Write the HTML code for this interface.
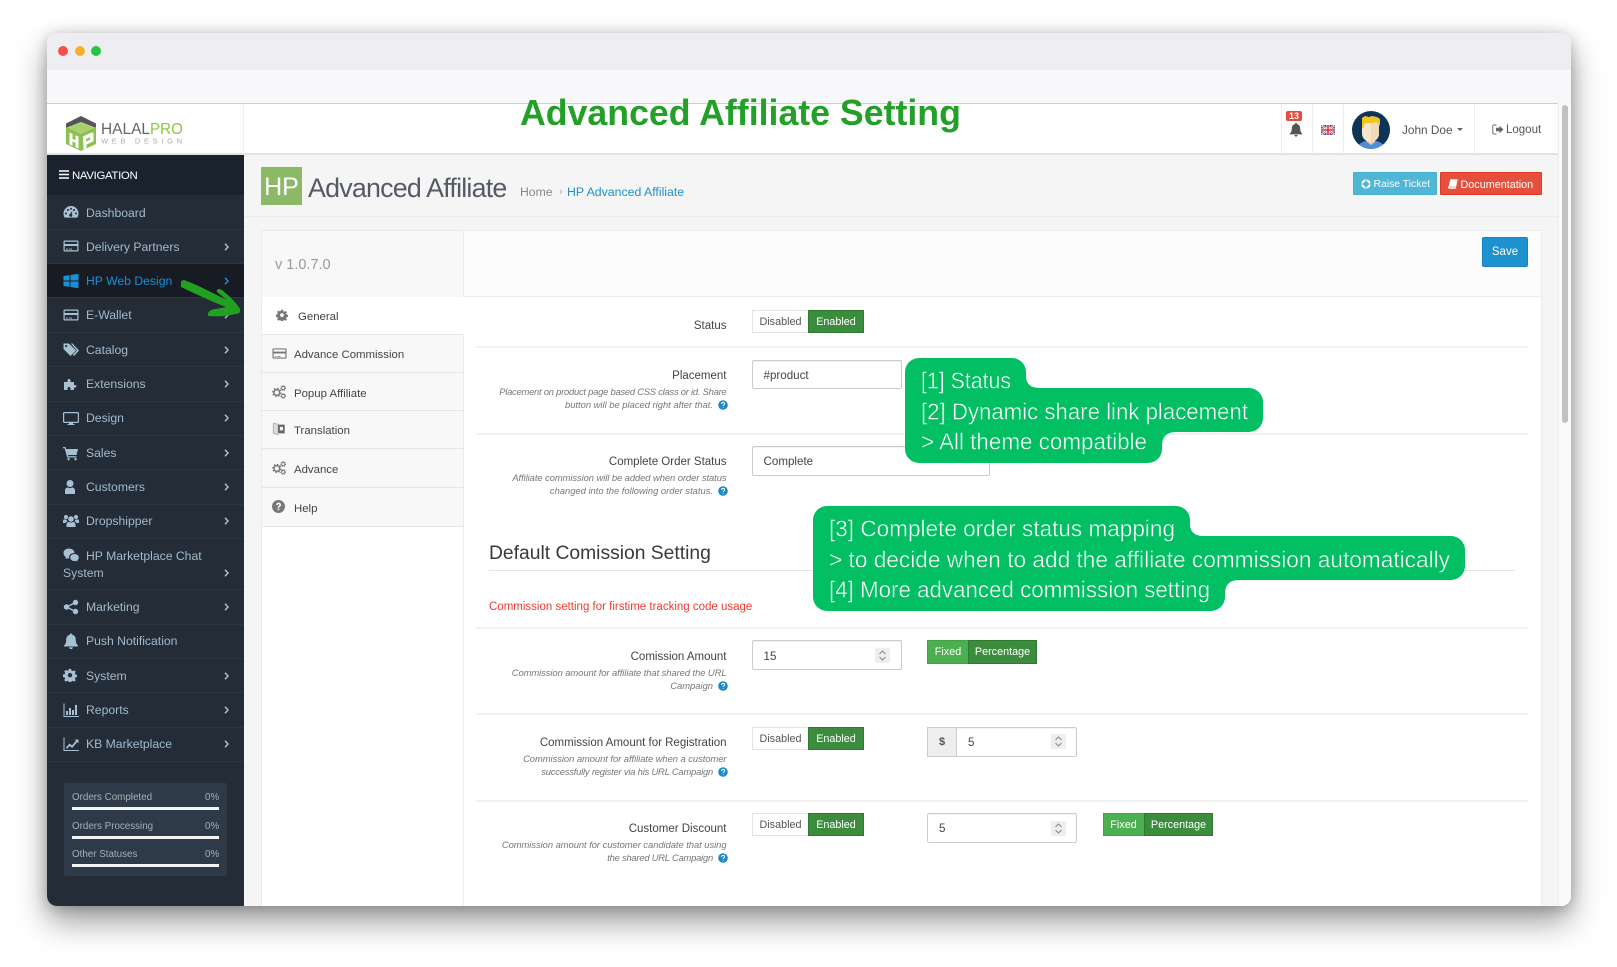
<!DOCTYPE html>
<html lang="en"><head><meta charset="utf-8"><title>Advanced Affiliate Setting</title>
<style>
html,body{margin:0;padding:0;background:#fff;width:1617px;height:967px;overflow:hidden}
body{font-family:"Liberation Sans",sans-serif;color:#444}
#win{position:absolute;left:47px;top:33px;width:1524px;height:873px;border-radius:10px;box-shadow:0 16px 32px rgba(0,0,0,.38),0 2px 14px rgba(0,0,0,.22)}
#clip{position:absolute;left:0;top:0;width:1524px;height:873px;border-radius:10px;overflow:hidden}
#p{position:absolute;left:-47px;top:-33px;width:1617px;height:967px;background:#fff}
.b{position:absolute}
.t{position:absolute;line-height:16px;white-space:nowrap}
.r{text-align:right;right:890.5px}
.nav{position:absolute;left:86px;line-height:16px;font-size:12.2px;color:#a3bacd;white-space:nowrap}
.ic{position:absolute;left:63px;width:16px;height:16px;fill:#a8c0d4}
.ch{position:absolute;left:224px;width:5px;height:8px;fill:none;stroke:#a8c0d4;stroke-width:1.5}
.sep{position:absolute;left:47px;width:197px;height:1px;background:#2b3643}
.tab{position:absolute;left:262px;width:201px;background:#f8f8f8;border-bottom:1px solid #e6e6e6;box-sizing:border-box}
.tl{position:absolute;left:294px;font-size:11.4px;line-height:16px;color:#444;white-space:nowrap}
.ti{position:absolute;left:272px;width:15px;height:15px;fill:#777}
.hr{position:absolute;left:476px;width:1052px;height:1.5px;background:#f1f1f1}
.lb{font-size:11.5px;color:#444}
.hp{font-size:9.4px;font-style:italic;color:#777}
.inp{position:absolute;background:#fff;border:1px solid #ccc;box-sizing:border-box;border-radius:2px;box-shadow:inset 0 1px 1px rgba(0,0,0,.05)}
.val{position:absolute;font-size:11.6px;line-height:16px;color:#444}
.dis{position:absolute;background:#fff;border:1px solid #e4e4e4;box-sizing:border-box;font-size:10.8px;line-height:22px;text-align:center;color:#555}
.en{position:absolute;background:#3b8c3d;border:1px solid #2f7a31;box-sizing:border-box;font-size:10.8px;line-height:22px;text-align:center;color:#fff}
.fx{position:absolute;background:#4caf50;border:1px solid #45a049;box-sizing:border-box;font-size:10.8px;line-height:22px;text-align:center;color:#fff}
.help{position:absolute;width:10px;height:10px}
.spin{position:absolute;width:15px;height:15px;background:#eee}
.spin svg{display:block}
</style></head>
<body>
<svg width="0" height="0" style="position:absolute">
<symbol id="card" viewBox="0 0 16 16"><path d="M1.500 2.500h13a1 1 0 0 1 1 1v9a1 1 0 0 1-1 1h-13a1 1 0 0 1-1-1v-9a1 1 0 0 1 1-1zM1.700 3.700V6h12.600V3.700zM1.700 8v4.300h12.600V8zM3 10.600h2v.9H3zM6 10.600h3v.9H6z" fill-rule="evenodd"/></symbol>
<symbol id="cog" viewBox="0 0 16 16"><path d="M6.700 1h2.600l.4 2 1.400.6 1.700-1.100 1.800 1.800-1.100 1.700.6 1.400 2 .4v2.600l-2 .4-.6 1.400 1.100 1.700-1.800 1.800-1.700-1.100-1.400.6-.4 2H6.700l-.4-2-1.400-.6-1.700 1.100-1.800-1.800 1.100-1.700-.6-1.400-2-.4V7.400l2-.4.6-1.400-1.100-1.700 1.800-1.800 1.700 1.100 1.400-.6zM8 5.700a2.500 2.500 0 1 0 0 5 2.500 2.500 0 0 0 0-5z" fill-rule="evenodd"/></symbol>
<symbol id="cogs" viewBox="0 0 16 16"><g fill="none" stroke="#777"><circle cx="5.500" cy="8.500" r="3.200" stroke-width="1.700"/><circle cx="5.500" cy="8.500" r="4.600" stroke-width="1.600" stroke-dasharray="1.800 1.800"/><circle cx="12.800" cy="3.500" r="1.900" stroke-width="1.100"/><circle cx="12.800" cy="3.500" r="2.800" stroke-width="1" stroke-dasharray="1.200 1.200"/><circle cx="12.800" cy="12.500" r="1.900" stroke-width="1.100"/><circle cx="12.800" cy="12.500" r="2.800" stroke-width="1" stroke-dasharray="1.200 1.200"/></g></symbol>
<symbol id="chev" viewBox="0 0 5 8"><path d="M1 .7l3 3.300-3 3.300"/></symbol>
<symbol id="bell" viewBox="0 0 16 16"><path d="M8 .5a1.200 1.200 0 0 1 1.200 1.300C11.700 2.300 12.800 4.300 12.800 7c0 3 1 4.500 2.200 5.500v1H1v-1C2.200 11.500 3.200 10 3.200 7c0-2.700 1.100-4.700 3.600-5.200A1.200 1.200 0 0 1 8 .5zM6.200 14.300h3.600a1.800 1.800 0 0 1-3.600 0z"/></symbol>
<symbol id="q" viewBox="0 0 10 10"><circle cx="5" cy="5" r="4.800" fill="#1e88c9"/><path d="M3.500 3.900C3.600 2.900 4.200 2.400 5.100 2.400c.9 0 1.500.5 1.500 1.300 0 .7-.4 1-.9 1.300-.4.300-.5.500-.5 1M5.200 7.100v.7" fill="none" stroke="#fff" stroke-width="1"/></symbol>
<symbol id="updn" viewBox="0 0 15 15"><path d="M4.500 6l3-3 3 3M4.500 9l3 3 3-3" fill="none" stroke="#888" stroke-width="1"/></symbol>
</svg>

<div id="win"><div id="clip"><div id="p">
<!-- Window chrome -->
<div class="b" style="left:47px;top:33px;width:1524px;height:37px;background:#eeeef2"></div>
<div class="b" style="left:47px;top:70px;width:1524px;height:33px;background:#f8f8fa"></div>
<div class="b" style="left:57.7px;top:46.3px;width:10px;height:10px;border-radius:50%;background:#f64f4a"></div>
<div class="b" style="left:74.7px;top:46.3px;width:10px;height:10px;border-radius:50%;background:#f7b02c"></div>
<div class="b" style="left:91.3px;top:46.3px;width:10px;height:10px;border-radius:50%;background:#27c53f"></div>

<!-- Header -->
<div class="b" style="left:47px;top:103px;width:1511px;height:52px;background:#fff;border-top:1px solid #cfcfcf;box-sizing:border-box;border-bottom:2px solid #e2e2e2"></div>
<div class="b" style="left:243px;top:104px;width:1px;height:51px;background:#eee"></div>
<div class="b" style="left:1281px;top:104px;width:1px;height:49px;background:#eee"></div>
<div class="b" style="left:1312px;top:104px;width:1px;height:49px;background:#eee"></div>
<div class="b" style="left:1343px;top:104px;width:1px;height:49px;background:#eee"></div>
<div class="b" style="left:1474px;top:104px;width:1px;height:49px;background:#eee"></div>

<!-- Logo -->
<svg class="b" style="left:64px;top:114px" width="124" height="38" viewBox="0 0 124 38">
<path d="M17 2L32 9.500V14L17 8 2 14V9.500z" fill="#555"/>
<path d="M3 14l14-6 14 6-14 6z" fill="#a9cf6e"/>
<path d="M2 13l15 7 15-7v17l-15 7-15-7z" fill="#8cc152"/>
<path d="M5.500 18.500l3 1.400v5l3 1.300v-5l3 1.400v12l-3-1.400v-4.500l-3-1.300v4.500l-3-1.400zM19 22.500l9-4.200 1.500 1v8l-7 3.300v3.500l-3 1.500z" fill="#fff"/>
<path d="M22 25l4-1.900v2.500l-4 1.900z" fill="#8cc152"/>
<text x="37" y="20" font-family="Liberation Sans" font-size="16" fill="#666" textLength="49" lengthAdjust="spacingAndGlyphs">HALAL</text>
<text x="86" y="20" font-family="Liberation Sans" font-size="16" fill="#8cc63f" textLength="33" lengthAdjust="spacingAndGlyphs">PRO</text>
<text x="37" y="29.500" font-family="Liberation Sans" font-size="7.500" fill="#aaa" textLength="81">WEB DESIGN</text>
</svg>

<!-- Header right -->
<div class="b" style="left:1286px;top:111px;width:16px;height:10px;background:#e74c3c;border-radius:2px;color:#fff;font-size:9px;font-weight:bold;line-height:10px;text-align:center">13</div>
<svg class="b" style="left:1289px;top:122px" width="14" height="15" fill="#555"><use href="#bell"/></svg>
<svg class="b" style="left:1321px;top:125px" width="14" height="10" viewBox="0 0 14 10"><rect width="14" height="10" fill="#3f4f9a"/><path d="M0 0l14 10M14 0L0 10" stroke="#fff" stroke-width="2"/><path d="M0 0l14 10M14 0L0 10" stroke="#e04050" stroke-width=".7"/><path d="M7 0v10M0 5h14" stroke="#fff" stroke-width="3"/><path d="M7 0v10M0 5h14" stroke="#e02a3a" stroke-width="1.600"/></svg>
<svg class="b" style="left:1352px;top:111px" width="38" height="38" viewBox="0 0 38 38"><defs><clipPath id="av"><circle cx="19" cy="19" r="19"/></clipPath></defs><g clip-path="url(#av)"><rect width="38" height="38" fill="#0e3557"/><path d="M5 38c1-6 6-8 14-9 8 1 13 3 14 9z" fill="#4b8fd6"/><path d="M15 24h8v7l-4 3-4-3z" fill="#e6cda8"/><path d="M10 9h17v14c0 4-4 8-8.500 8S10 27 10 23z" fill="#f7e6cc"/><path d="M19 10h8v13c0 4-4 8-8 8z" fill="#efd9b8"/><path d="M10 17V7l3-2 4 1 3-1 5 1 3 2v7l-3-4-6 1-6 0-2 5z" fill="#f2c51c"/></g></svg>
<div class="t" style="left:1402px;top:122px;font-size:11.8px;color:#555">John Doe</div>
<div class="b" style="left:1456.5px;top:128px;width:0;height:0;border-left:3.5px solid transparent;border-right:3.5px solid transparent;border-top:3.5px solid #666"></div>
<svg class="b" style="left:1492px;top:124px" width="12" height="11" viewBox="0 0 12 11"><path d="M4.500 1H2.200A1.500 1.500 0 0 0 .7 2.500v6A1.500 1.500 0 0 0 2.200 10h2.300" fill="none" stroke="#888" stroke-width="1.200"/><path d="M4 3.800h3.500V1.800l4 3.700-4 3.700V7.200H4z" fill="#666"/></svg>
<div class="t" style="left:1506px;top:122px;font-size:11.5px;color:#555">Logout</div>

<!-- Sidebar -->
<div class="b" style="left:47px;top:155px;width:197px;height:751px;background:#232c37"></div>
<div class="b" style="left:47px;top:155px;width:197px;height:40px;background:#1a222e"></div>
<div class="b" style="left:47px;top:263px;width:197px;height:34px;background:#171c24"></div>
<svg class="b" style="left:59px;top:170px" width="10" height="9"><path d="M0 1h10M0 4.500h10M0 8h10" stroke="#fff" stroke-width="1.500"/></svg>
<div class="t" style="left:72px;top:168px;font-size:11.4px;color:#fff;letter-spacing:-.32px">NAVIGATION</div>

<div class="sep" style="top:229px"></div><div class="sep" style="top:263px"></div><div class="sep" style="top:297px"></div><div class="sep" style="top:332px"></div><div class="sep" style="top:366px"></div><div class="sep" style="top:401px"></div><div class="sep" style="top:435px"></div><div class="sep" style="top:469px"></div><div class="sep" style="top:504px"></div><div class="sep" style="top:538px"></div><div class="sep" style="top:589px"></div><div class="sep" style="top:624px"></div><div class="sep" style="top:658px"></div><div class="sep" style="top:692px"></div><div class="sep" style="top:727px"></div><div class="sep" style="top:761px"></div>

<svg class="ic" style="top:204px" viewBox="0 0 16 16"><path d="M8 2a7.500 7.500 0 0 0-7.500 7.500c0 1.500.4 2.900 1.200 4.100h12.600c.8-1.200 1.200-2.600 1.200-4.100A7.500 7.500 0 0 0 8 2zM3 8.500a1 1 0 1 1 0 2 1 1 0 0 1 0-2zm2-3.500a1 1 0 1 1 0 2 1 1 0 0 1 0-2zm3-1.200a1 1 0 1 1 0 2 1 1 0 0 1 0-2zm3 1.200a1 1 0 1 1 0 2 1 1 0 0 1 0-2zm2 3.500a1 1 0 1 1 0 2 1 1 0 0 1 0-2zM9.500 6.500L8.800 10a1.600 1.600 0 1 1-1.500-.3z" fill-rule="evenodd"/></svg>
<div class="nav" style="top:205px">Dashboard</div>
<svg class="ic" style="top:238px"><use href="#card"/></svg>
<div class="nav" style="top:239px">Delivery Partners</div>
<svg class="ch" style="top:243px"><use href="#chev"/></svg>
<svg class="ic" style="top:273px;fill:#1a8fd6" viewBox="0 0 16 16"><path d="M.5 3l6-.9v5.400h-6zM7.500 2l8-1.200v6.700h-8zM.5 8.500h6v5.400l-6-.9zM7.500 8.500h8v6.700l-8-1.200z"/></svg>
<div class="nav" style="top:273px;color:#1a8fd6">HP Web Design</div>
<svg class="ch" style="top:277px;stroke:#1a8fd6"><use href="#chev"/></svg>
<svg class="ic" style="top:307px"><use href="#card"/></svg>
<div class="nav" style="top:307px">E-Wallet</div>
<svg class="ch" style="top:311px"><use href="#chev"/></svg>
<svg class="ic" style="top:341px" viewBox="0 0 16 16"><path d="M.5 2.500h5.500l7 7-5.500 5.500-7-7zM3.200 4a1.100 1.100 0 1 0 0 2.200 1.100 1.100 0 0 0 0-2.200zM8 2.500h1.500l6.500 7-5 5.500-1.200-1.200 4-4.300z" fill-rule="evenodd"/></svg>
<div class="nav" style="top:342px">Catalog</div>
<svg class="ch" style="top:346px"><use href="#chev"/></svg>
<svg class="ic" style="top:376px" viewBox="0 0 16 16"><path d="M1 6h3.500V4.500a1.500 1.500 0 1 1 3 0V6H11v3h.8a1.300 1.300 0 1 1 0 2.500H11V14H7.500v-1.500a1.500 1.500 0 1 0-3 0V14H1z"/></svg>
<div class="nav" style="top:376px">Extensions</div>
<svg class="ch" style="top:380px"><use href="#chev"/></svg>
<svg class="ic" style="top:410px" viewBox="0 0 16 16"><path d="M1.500 2h13A1.500 1.500 0 0 1 16 3.500v8a1.500 1.500 0 0 1-1.500 1.500H10v1h1.500v1h-7v-1H6v-1H1.500A1.500 1.500 0 0 1 0 11.500v-8A1.500 1.500 0 0 1 1.500 2zM1.200 3.200v8.600h13.600V3.200z" fill-rule="evenodd"/></svg>
<div class="nav" style="top:410px">Design</div>
<svg class="ch" style="top:414px"><use href="#chev"/></svg>
<svg class="ic" style="top:445px" viewBox="0 0 16 16"><path d="M0 2h2.500l.6 2H15l-1.500 6H5l.3 1.200h8.200v1.300H4.200L1.600 3.300H0zM5.500 13a1.200 1.200 0 1 1 0 2.400 1.200 1.200 0 0 1 0-2.400zm7 0a1.200 1.200 0 1 1 0 2.400 1.200 1.200 0 0 1 0-2.400z"/></svg>
<div class="nav" style="top:445px">Sales</div>
<svg class="ch" style="top:449px"><use href="#chev"/></svg>
<svg class="ic" style="top:479px" viewBox="0 0 16 16"><circle cx="7" cy="4.500" r="3.500"/><path d="M2 15v-3.500C2 9.500 3.500 8.500 5 8.500c1.300.8 2.700.8 4 0 1.500 0 3 1 3 3V15z"/></svg>
<div class="nav" style="top:479px">Customers</div>
<svg class="ch" style="top:483px"><use href="#chev"/></svg>
<svg class="ic" style="top:513px" viewBox="0 0 16 16"><circle cx="8" cy="6" r="2.800"/><circle cx="3" cy="4" r="2"/><circle cx="13" cy="4" r="2"/><path d="M3.500 14v-2.500C3.500 10 4.500 9 6 9c1.300.7 2.700.7 4 0 1.500 0 2.500 1 2.500 2.500V14zM0 10V8c0-1 .6-1.800 2-1.800.6.400 1.200.6 2 .6-.3.800 0 1.500.5 1.700C3 9 2.500 9.500 2.400 10zM16 10V8c0-1-.6-1.800-2-1.800-.6.400-1.200.6-2 .6.300.8 0 1.500-.5 1.700 1.500.500 2 1 2.100 1.500z"/></svg>
<div class="nav" style="top:513px">Dropshipper</div>
<svg class="ch" style="top:517px"><use href="#chev"/></svg>
<svg class="ic" style="top:547px" viewBox="0 0 16 16"><path d="M6 1.500c3 0 5.500 1.800 5.500 4.300 0 .2 0 .3 0 .4-2.800-.3-5.500 1.500-5.500 4.200 0 .4.100.7.200 1.100-.6 0-1.300-.1-1.900-.3L2.500 12l.4-1.800C1.200 9.200.5 7.700.5 5.800.5 3.300 3 1.500 6 1.500z"/><path d="M11.500 7c2.400 0 4.300 1.500 4.300 3.500 0 1.100-.6 2-1.500 2.700l.3 1.500-1.600-.9c-.5.200-1 .3-1.500.3-2.400 0-4.300-1.600-4.300-3.600S9.100 7 11.500 7z"/></svg>
<div class="nav" style="top:548px">HP Marketplace Chat</div>
<div class="nav" style="top:565px;left:63px">System</div>
<svg class="ch" style="top:569px"><use href="#chev"/></svg>
<svg class="ic" style="top:599px" viewBox="0 0 16 16"><circle cx="12.500" cy="3.500" r="2.700"/><circle cx="12.500" cy="12.500" r="2.700"/><circle cx="3.500" cy="8" r="2.700"/><path d="M3.500 8l9-4.500M3.500 8l9 4.500" stroke="#a8c0d4" stroke-width="1.500"/></svg>
<div class="nav" style="top:599px">Marketing</div>
<svg class="ch" style="top:603px"><use href="#chev"/></svg>
<svg class="ic" style="top:633px"><use href="#bell"/></svg>
<div class="nav" style="top:633px">Push Notification</div>
<svg class="ic" style="top:668px;width:14px;height:14px"><use href="#cog"/></svg>
<div class="nav" style="top:668px">System</div>
<svg class="ch" style="top:672px"><use href="#chev"/></svg>
<svg class="ic" style="top:702px" viewBox="0 0 16 16"><path d="M.5 1.500h1v12.500h14.500v1H.5zM3 9h2v4H3zM6 6h2v7H6zM9 8h2v5H9zM12 3h2v10h-2z"/></svg>
<div class="nav" style="top:702px">Reports</div>
<svg class="ch" style="top:706px"><use href="#chev"/></svg>
<svg class="ic" style="top:736px" viewBox="0 0 16 16"><path d="M.5 1.500h1v12.500h14.500v1H.5zM3 11.500l3.500-4 2.500 2L13 4.500l-1.500-1H15.500V7.500l-1.300-1.500-5 6-2.500-2-2.800 3z"/></svg>
<div class="nav" style="top:736px">KB Marketplace</div>
<svg class="ch" style="top:740px"><use href="#chev"/></svg>

<div class="b" style="left:64px;top:783px;width:163px;height:93px;background:#2e3a47;border-radius:2px"></div>
<div class="t" style="left:72px;top:790px;font-size:9.8px;color:#a9aeb3">Orders Completed</div>
<div class="t" style="left:205px;top:790px;font-size:9.8px;color:#a9aeb3">0%</div>
<div class="b" style="left:72px;top:807px;width:147px;height:2.5px;background:#f4f4f4"></div>
<div class="t" style="left:72px;top:819px;font-size:9.8px;color:#a9aeb3">Orders Processing</div>
<div class="t" style="left:205px;top:819px;font-size:9.8px;color:#a9aeb3">0%</div>
<div class="b" style="left:72px;top:836px;width:147px;height:2.5px;background:#f4f4f4"></div>
<div class="t" style="left:72px;top:847px;font-size:9.8px;color:#a9aeb3">Other Statuses</div>
<div class="t" style="left:205px;top:847px;font-size:9.8px;color:#a9aeb3">0%</div>
<div class="b" style="left:72px;top:864px;width:147px;height:2.5px;background:#f4f4f4"></div>

<!-- Content -->
<div class="b" style="left:244px;top:155px;width:1314px;height:751px;background:#f5f5f5"></div>
<div class="b" style="left:1558px;top:103px;width:13px;height:803px;background:#fafafa;border-left:1px solid #eee;box-sizing:border-box"></div>
<div class="b" style="left:1562px;top:105px;width:6px;height:318px;background:#c1c1c1;border-radius:3px"></div>
<div class="b" style="left:244px;top:216px;width:1314px;height:1px;background:#ececec"></div>

<div class="b" style="left:261px;top:167px;width:41px;height:38px;background:#8cb966;color:#fff;font-size:25px;line-height:40px;text-align:center">HP</div>
<div class="t" style="left:308px;top:172px;font-size:26.8px;line-height:32px;color:#555a66;letter-spacing:-.78px">Advanced Affiliate</div>
<div class="t" style="left:520px;top:184px;font-size:12.2px;color:#888">Home</div>
<div class="t" style="left:559px;top:184px;font-size:11px;color:#aaa">›</div>
<div class="t" style="left:567px;top:184px;font-size:12.3px;color:#1e91cf">HP Advanced Affiliate</div>

<div class="b" style="left:1353px;top:172px;width:84px;height:23px;background:#4fb6d6;border:1px solid #45b0d0;box-sizing:border-box;border-radius:1px"></div>
<svg class="b" style="left:1361px;top:179px" width="10" height="10" viewBox="0 0 10 10"><circle cx="5" cy="5" r="3.700" fill="none" stroke="#fff" stroke-width="2"/><path d="M5 0v10M0 5h10" stroke="#4fb6d6" stroke-width="1"/></svg>
<div class="t" style="left:1373.5px;top:177px;font-size:10.4px;color:#fff">Raise Ticket</div>
<div class="b" style="left:1440px;top:172px;width:102px;height:23px;background:#e64f3c;border:1px solid #e03a26;box-sizing:border-box;border-radius:1px"></div>
<svg class="b" style="left:1448px;top:179px" width="10" height="10" viewBox="0 0 10 10"><path d="M2.500.5h7L8 7.500H1zM1 7.500a1 1 0 0 0 0 2h6.500l.5-1H2" fill="#fff" stroke="#fff" stroke-width=".5"/></svg>
<div class="t" style="left:1460.5px;top:177px;font-size:10.8px;color:#fff">Documentation</div>

<!-- Panel -->
<div class="b" style="left:261px;top:230px;width:1281px;height:676px;background:#fff;border:1px solid #ebebeb;border-bottom:0;box-sizing:border-box"></div>
<div class="b" style="left:262px;top:231px;width:1279px;height:66px;background:#fcfcfc;border-bottom:1px solid #ececec;box-sizing:border-box"></div>
<div class="b" style="left:262px;top:231px;width:202px;height:66px;background:#f8f8f8;border-right:1px solid #ececec;box-sizing:border-box"></div>
<div class="t" style="left:275px;top:257px;font-size:14.5px;color:#999">v 1.0.7.0</div>
<div class="b" style="left:1482px;top:237px;width:46px;height:30px;background:#1e91cf;border:1px solid #1a85bf;box-sizing:border-box;border-radius:2px;color:#fff;font-size:11.5px;line-height:29px;text-align:center">Save</div>

<!-- Tabs -->
<div class="b" style="left:462.5px;top:334px;width:1px;height:572px;background:#ececec"></div>
<div class="tab" style="top:334px;height:39px;border-top:1px solid #e6e6e6"></div>
<div class="tab" style="top:373px;height:38px"></div>
<div class="tab" style="top:411px;height:38px"></div>
<div class="tab" style="top:449px;height:39px"></div>
<div class="tab" style="top:488px;height:39px"></div>
<svg class="ti" style="left:275.5px;top:309px;width:12px;height:12px"><use href="#cog"/></svg>
<div class="tl" style="left:298px;top:309px">General</div>
<svg class="ti" style="top:346px"><use href="#card"/></svg>
<div class="tl" style="top:347px">Advance Commission</div>
<svg class="ti" style="top:385px;width:14px;height:14px"><use href="#cogs"/></svg>
<div class="tl" style="top:386px">Popup Affiliate</div>
<svg class="ti" style="top:422px;width:14px;height:14px" viewBox="0 0 16 16"><path d="M1.500 1.500l5.500 1v12l-5.500-1.500z" fill="#ddd" stroke="#aaa"/><path d="M7 3h7.500v10H8.500L7 12zM9 5.500h3.500v4H9z" fill="#666" fill-rule="evenodd"/></svg>
<div class="tl" style="top:423px">Translation</div>
<svg class="ti" style="top:461px;width:14px;height:14px"><use href="#cogs"/></svg>
<div class="tl" style="top:462px">Advance</div>
<svg class="ti" style="top:500px;width:13px;height:13px" viewBox="0 0 16 16"><path d="M8 0a8 8 0 1 1 0 16A8 8 0 0 1 8 0zM5 6.300h2c.1-.8.500-1.200 1.100-1.200.6 0 1 .4 1 .9 0 1.200-2.200 1.300-2.200 3.500h2c0-1.500 2.300-1.600 2.300-3.700 0-1.700-1.400-2.600-3.100-2.600C6.300 3.200 5.100 4.400 5 6.300zM7 10.500v2h2v-2z" fill-rule="evenodd"/></svg>
<div class="tl" style="top:501px">Help</div>

<!-- Form rows -->
<div class="t r lb" style="top:318px">Status</div>
<div class="dis" style="left:752px;top:310px;width:57px;height:23px">Disabled</div>
<div class="en" style="left:808px;top:310px;width:56px;height:23px">Enabled</div>
<div class="hr" style="top:346px"></div>

<div class="t r lb" style="top:368px">Placement</div>
<div class="t r hp" style="top:384px;letter-spacing:-.23px">Placement on product page based CSS class or id. Share</div>
<div class="t hp" style="right:904px;top:397px">button will be placed right after that.</div>
<svg class="help" style="left:718px;top:400px"><use href="#q"/></svg>
<div class="inp" style="left:752px;top:360px;width:150px;height:29px"></div>
<div class="val" style="left:763.5px;top:368px">#product</div>
<div class="hr" style="top:433px"></div>

<div class="t r lb" style="top:454px">Complete Order Status</div>
<div class="t r hp" style="top:470px;letter-spacing:-.06px">Affiliate commission will be added when order status</div>
<div class="t hp" style="right:904px;top:483px">changed into the following order status.</div>
<svg class="help" style="left:718px;top:486px"><use href="#q"/></svg>
<div class="inp" style="left:752px;top:446px;width:238px;height:30px"></div>
<div class="val" style="left:763.5px;top:454px">Complete</div>

<div class="t" style="left:489px;top:543px;font-size:19.3px;line-height:22px;color:#3a3a3a">Default Comission Setting</div>
<div class="b" style="left:489px;top:570px;width:1026px;height:1px;background:#e6e6e6"></div>
<div class="t" style="left:489px;top:599px;font-size:11.5px;color:#f23a2f">Commission setting for firstime tracking code usage</div>
<div class="hr" style="top:627px"></div>

<div class="t r lb" style="top:649px">Comission Amount</div>
<div class="t r hp" style="top:665px;letter-spacing:-.06px">Commission amount for affiliate that shared the URL</div>
<div class="t hp" style="right:904px;top:678px">Campaign</div>
<svg class="help" style="left:718px;top:681px"><use href="#q"/></svg>
<div class="inp" style="left:752px;top:640px;width:150px;height:30px"></div>
<div class="val" style="left:763.5px;top:649px">15</div>
<div class="spin" style="left:875px;top:648px"><svg width="15" height="15"><use href="#updn"/></svg></div>
<div class="fx" style="left:927px;top:640px;width:42px;height:24px">Fixed</div>
<div class="en" style="left:968px;top:640px;width:69px;height:24px">Percentage</div>
<div class="hr" style="top:713px"></div>

<div class="t r lb" style="top:735px">Commission Amount for Registration</div>
<div class="t r hp" style="top:751px;letter-spacing:-.04px">Commission amount for affiliate when a customer</div>
<div class="t hp" style="right:904px;top:764px;letter-spacing:-.2px">successfully register via his URL Campaign</div>
<svg class="help" style="left:718px;top:767px"><use href="#q"/></svg>
<div class="dis" style="left:752px;top:727px;width:57px;height:23px">Disabled</div>
<div class="en" style="left:808px;top:727px;width:56px;height:23px">Enabled</div>
<div class="inp" style="left:927px;top:727px;width:150px;height:30px"></div>
<div class="b" style="left:927px;top:727px;width:30px;height:30px;background:#eee;border:1px solid #ccc;box-sizing:border-box;font-size:11px;font-weight:bold;line-height:29px;text-align:center;color:#555">$</div>
<div class="val" style="left:968px;top:735px">5</div>
<div class="spin" style="left:1051px;top:734px"><svg width="15" height="15"><use href="#updn"/></svg></div>
<div class="hr" style="top:800px"></div>

<div class="t r lb" style="top:821px">Customer Discount</div>
<div class="t r hp" style="top:837px;letter-spacing:-.04px">Commission amount for customer candidate that using</div>
<div class="t hp" style="right:904px;top:850px;letter-spacing:-.22px">the shared URL Campaign</div>
<svg class="help" style="left:718px;top:853px"><use href="#q"/></svg>
<div class="dis" style="left:752px;top:813px;width:57px;height:23px">Disabled</div>
<div class="en" style="left:808px;top:813px;width:56px;height:23px">Enabled</div>
<div class="inp" style="left:927px;top:813px;width:150px;height:30px"></div>
<div class="val" style="left:939px;top:821px">5</div>
<div class="spin" style="left:1051px;top:821px"><svg width="15" height="15"><use href="#updn"/></svg></div>
<div class="fx" style="left:1102.5px;top:813px;width:42px;height:23px">Fixed</div>
<div class="en" style="left:1144px;top:813px;width:69px;height:23px">Percentage</div>

<!-- Annotations -->
<svg class="b" style="left:0;top:0" width="1617" height="967" viewBox="0 0 1617 967" font-family="Liberation Sans" font-size="23.5" fill="#fff">
<path d="M181 281L184 280C198 285 212 293 227 300L217 292C216 289 219 288 222 290C228 295 236 302 240 309C241 312 239 314 236 314C227 316 217 317 208 316C207 312 211 309 216 309L226 307C210 301 194 293 181 287Z" fill="#22a022"/>
<path d="M919 358H1012a14 14 0 0 1 14 14V376Q1026 388 1040 388H1249a14 14 0 0 1 14 14V418a14 14 0 0 1-14 14H1176Q1162 432 1162 446V449a14 14 0 0 1-14 14H919a14 14 0 0 1-14-14V372a14 14 0 0 1 14-14Z" fill="#03bf63"/>
<path d="M827 506H1176a14 14 0 0 1 14 14V524Q1190 536 1204 536H1451a14 14 0 0 1 14 14V566a14 14 0 0 1-14 14H1239Q1225 580 1225 594V597a14 14 0 0 1-14 14H827a14 14 0 0 1-14-14V520a14 14 0 0 1 14-14Z" fill="#03bf63"/>
<g stroke="#03bf63" stroke-width=".45">
<text x="921" y="388.500" textLength="90" lengthAdjust="spacingAndGlyphs">[1] Status</text>
<text x="921" y="419.500" textLength="327" lengthAdjust="spacingAndGlyphs">[2] Dynamic share link placement</text>
<text x="921" y="449.500" textLength="226" lengthAdjust="spacingAndGlyphs">&gt; All theme compatible</text>
<text x="829" y="536.500" textLength="346" lengthAdjust="spacingAndGlyphs">[3] Complete order status mapping</text>
<text x="829" y="567.500" textLength="621" lengthAdjust="spacingAndGlyphs">&gt; to decide when to add the affiliate commission automatically</text>
<text x="829" y="597.500" textLength="381" lengthAdjust="spacingAndGlyphs">[4] More advanced commission setting</text>
</g>
</svg>

<!-- Title -->
<div class="t" style="left:520px;top:92px;font-size:35.7px;line-height:42px;font-weight:bold;color:#22a028">Advanced Affiliate Setting</div>
</div></div></div>
</body></html>
